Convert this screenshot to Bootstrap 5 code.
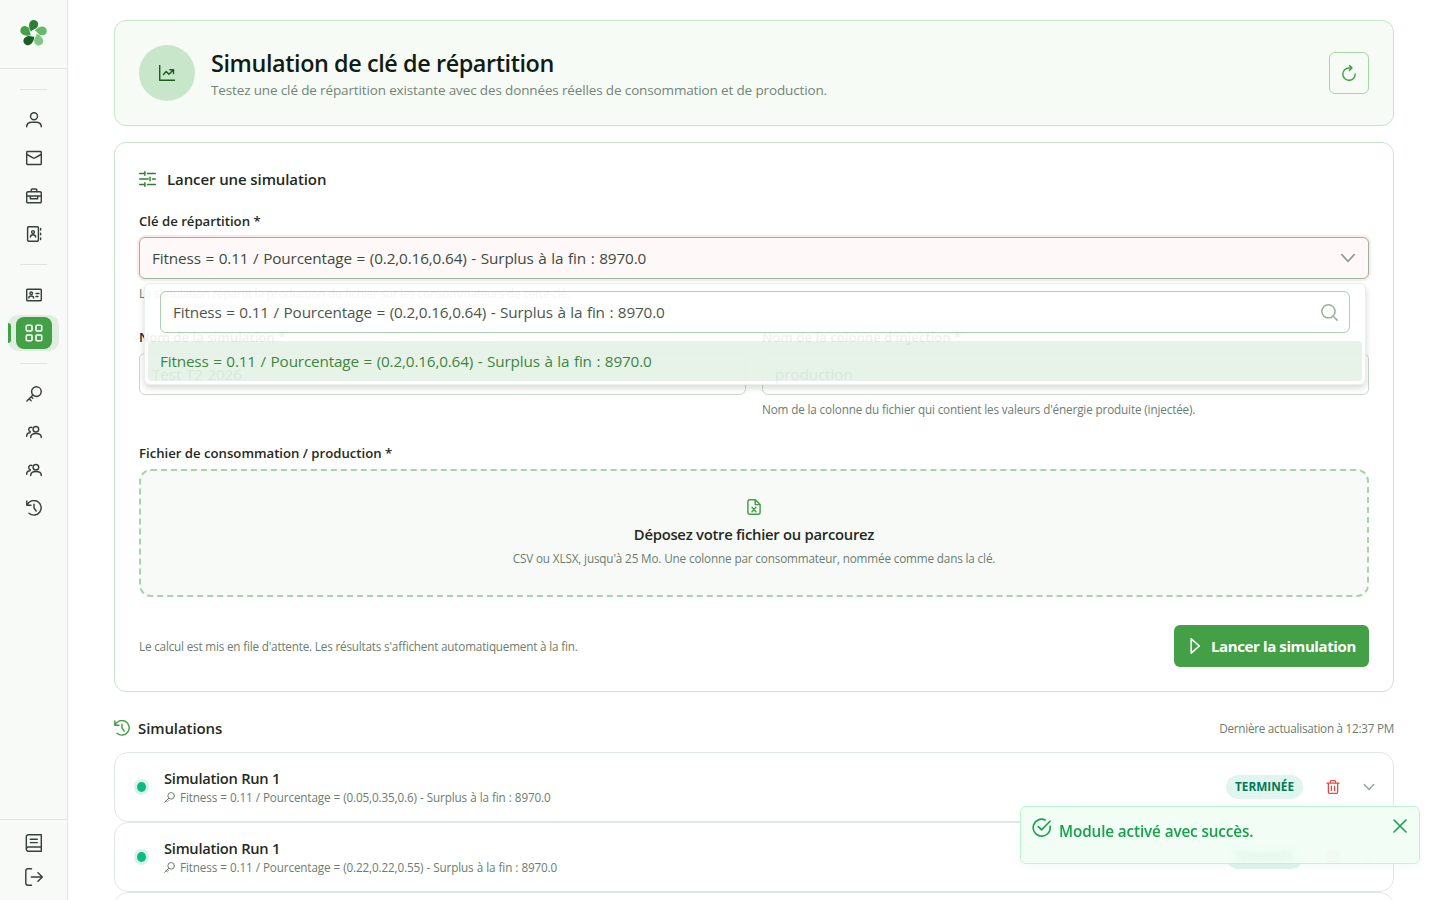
<!DOCTYPE html>
<html lang="fr">
<head>
<meta charset="utf-8">
<meta name="viewport" content="width=device-width, initial-scale=1">
<title>Simulation de clé de répartition</title>
<link href="https://cdn.jsdelivr.net/npm/bootstrap@5.3.0/dist/css/bootstrap.min.css" rel="stylesheet">
<style>
body{font-family:"Open Sans","Noto Sans",sans-serif;color:#1f2a21;background:#fff;height:100vh;overflow:hidden;font-size:16px}
svg{display:block;flex:none}
.ic{fill:none;stroke:currentColor;stroke-width:1.45;stroke-linecap:round;stroke-linejoin:round}
.rail{width:68px;height:100vh;background:#f8faf8;border-right:1px solid #e0e7e1;color:#374139}
.rail-logo{height:69px;border-bottom:1px solid #e0e7e1;padding-bottom:1px}
.rail-nav{padding-top:20px}
.rail-item{height:38px;width:50px}
.rail-sep{width:27px;height:1px;background:#dfe5e0;margin:11px 0}
.rail-sep.top-sep{margin-top:0}
.rail-on{width:51px;height:36px;margin:1px 0;background:#e0ede1;border-radius:10px;position:relative}
.rail-on::before{content:"";position:absolute;left:0;top:8px;width:3px;height:20px;background:#43a047;border-radius:0 3px 3px 0}
.rail-tile{width:36px;height:32px;background:#43a047;border-radius:8px;color:#fff}
.rail-foot{height:81px;border-top:1px solid #e0e7e1;padding-top:14px;gap:16px}
.page{width:1280px;height:100vh;padding-top:20px;overflow:hidden}
.hero{height:106px;padding:24px;background:#f6fbf6;border:1px solid #c8e6c9;border-radius:12px}
.hero-ico{width:56px;height:56px;background:#c8e6c9;color:#1b5e20}
.t{white-space:nowrap}
.t-h1{font-size:23.4px;font-weight:600;line-height:30px;color:#121b14;letter-spacing:-.41px;padding:2px 0 1px}
.t-sub{font-size:13.5px;line-height:21px;color:#738577;letter-spacing:-.14px;padding-top:1px}
.t-sec{font-size:15px;font-weight:600;line-height:24px;letter-spacing:-.1px}
.t-drop{font-size:14.8px;letter-spacing:-.26px;margin-top:7px}
.t-run{font-size:14.7px;line-height:22px;letter-spacing:-.27px}
.t-lab{font-size:13.2px;font-weight:600;line-height:20px;margin-bottom:6px;letter-spacing:-.02px}
.t-help{font-size:11.7px;line-height:20px;color:#6b7d6f;letter-spacing:-.135px}
.t-in{font-size:15.3px;line-height:24px;color:#3c4a40;word-spacing:.8px;letter-spacing:-.135px}
.t-help.ls-1{letter-spacing:-.18px}
.t-help.ls-2{letter-spacing:-.25px}
.btn-refresh{width:40px;height:42px;border:1px solid #a5d6a7;border-radius:6px;color:#43a047}
.panel{margin-top:16px;height:550px;padding:24px;background:#fff;border:1px solid #c8e6c9;border-radius:12px}
.panel-head{height:24px;gap:11px;margin-bottom:20px}
.field{height:42px;border:1px solid #cbd8cd;border-radius:6px;padding:0 12px;background:#fff}
.field-bad{background:#fff8f8;border-color:#9bb39e;box-shadow:0 0 0 2px #fdeaea;color:#90a093}
.hint{margin-top:4px;height:20px}
.block-gap{margin-top:24px}
.panel-foot{margin-top:28px}
.pop{position:absolute;left:5px;right:3px;top:46px;height:102px;background:#fff;border:1px solid #e9efe9;border-radius:6px;opacity:.93;box-shadow:0 3px 6px rgba(0,0,0,.16);z-index:5;padding:7px 3px 3px}
.pop .t-in{letter-spacing:-.17px}
.pop .field{margin:0 12px;border-color:#a5cfa8;padding-right:11px}
.pop-opt{margin-top:8px;height:40px;padding:0 12px;background:#e6f3e7;border-radius:4px}
.pop-opt .t-in{color:#2e7d32}
.drop{height:128px;border:2px dashed #a5d6a7;border-radius:12px;background:#f8faf8;padding-top:28px}
.drop .t-help{margin-top:2px}
.btn-run{width:195px;height:42px;background:#43a047;border-radius:6px;color:#fff}
.btn-run .t-in{color:#fff;font-size:15px;letter-spacing:-.39px;word-spacing:0}
.list-head{margin:24px 0 12px;height:24px}
.run{height:70px;border:1px solid #e0e7e4;border-radius:14px;padding:0 18px 0 22px;background:#fff}
.run-text{margin-left:18px}
.run-sub{line-height:17px;padding-bottom:1px;gap:5px;word-spacing:.25px}
.run-bin{color:#ef4444;margin:0 23px}
.run-more{color:#90a093}
.dot{width:9px;height:10px;border-radius:50%;background:#10b981;box-shadow:0 0 0 3px #d6f3e9}
.pill{width:77px;height:24px;background:#e0f5ee;border-radius:12px;color:#047857;font-size:11.8px;font-weight:700}
.note{position:absolute;right:20px;top:806px;width:400px;height:58px;background:rgba(240,253,244,.94);backdrop-filter:blur(2px);border:1px solid #bbf7d0;border-radius:6px;color:#16a34a;box-shadow:0 4px 8px rgba(34,197,94,.05);padding:11px;z-index:9}
.note .t-in{color:inherit;margin:1px 0 0 7px;word-spacing:0;letter-spacing:-.13px}
</style>
</head>
<body class="d-flex">
<svg width="0" height="0" class="position-absolute">
<defs>
<symbol id="i-key" viewBox="0 0 16 16"><circle cx="10.4" cy="5.6" r="4.8"/><path d="M7 9 .9 15.1M3.2 12.8l1.9 1.9M5.2 10.8l1.5 1.5"/></symbol>
<symbol id="i-users" viewBox="0 0 16 16"><circle cx="9.9" cy="5.2" r="2.8"/><path d="M4.700 13.400c0-3 1.900-3.900 5.200-3.900s5.400.9 5.400 3.900M5.900 3.500C4.300 2.900 2.700 4 2.700 5.600c0 1 .6 1.800 1.600 2.100M.7 12.200c0-2 1.100-3.300 3.300-3.400"/></symbol>
<symbol id="i-hist" viewBox="0 0 16 16"><path d="M.8 1v4.200H5M1.100 5A7.300 7.300 0 1 1 3 13.300M8 4.300V8l2.200 3"/></symbol>
<symbol id="i-down" viewBox="0 0 16 16"><path stroke-width="1.7" d="m1.800 4.700 6.200 6.600 6.200-6.600"/></symbol>
<symbol id="i-bin" viewBox="0 0 16 16"><path d="M1 3.700h14M2.700 3.700v9.900c0 1 .6 1.700 1.700 1.700h7.200c1 0 1.700-.7 1.700-1.700V3.700M5 3.500V2C5 1.200 5.400.8 6.200.8h3.600c.8 0 1.200.4 1.200 1.200v1.500M6.200 7v5M9.800 7v5"/></symbol>
<path id="petal" d="M-2.400-2C-5.600-6.500-5-13.600.1-13.600 5.100-13.600 5.700-8.200 3.300-5.700 1.600-4-1-3.800-2.400-2Z"/>
</defs>
</svg>

<aside class="rail d-flex flex-column flex-shrink-0">
  <div class="rail-logo d-flex align-items-center justify-content-center">
    <svg width="33" height="33" viewBox="-16.5 -16.5 33 33">
      <use href="#petal" fill="#2e7d32"/><use href="#petal" fill="#66bb6a" transform="rotate(72)"/><use href="#petal" fill="#81c784" transform="rotate(144)"/><use href="#petal" fill="#1b5e20" transform="rotate(216)"/><use href="#petal" fill="#43a047" transform="rotate(288)"/></svg>
  </div>
  <nav class="rail-nav d-flex flex-column align-items-center flex-grow-1">
    <div class="rail-sep top-sep"></div>
    <div class="rail-item d-flex align-items-center justify-content-center"><svg class="ic" width="16" height="16" viewBox="0 0 16 16"><circle cx="8" cy="4.3" r="3.5"/><path d="M.7 14.800c0-3.300 2-4.600 5.300-4.600h4c3.300 0 5.300 1.300 5.300 4.600"/></svg></div>
    <div class="rail-item d-flex align-items-center justify-content-center"><svg class="ic" width="16" height="16" viewBox="0 0 16 16"><rect x=".7" y="1.5" width="14.6" height="13" rx="1"/><path d="M1 4.500l6 3.400q1 .5 2 0l6-3.400"/></svg></div>
    <div class="rail-item d-flex align-items-center justify-content-center"><svg class="ic" width="16" height="16" viewBox="0 0 16 16"><rect x=".7" y="3.7" width="14.6" height="11" rx="1.2"/><path d="M5.200 3.500V2q0-1 1-1h3.600q1 0 1 1v1.500M1 8h14M4.300 8v2.700h7.400V8"/></svg></div>
    <div class="rail-item d-flex align-items-center justify-content-center"><svg class="ic" width="16" height="16" viewBox="0 0 16 16"><rect x="1.6" y=".7" width="10.8" height="14.6" rx="1.2"/><circle cx="7" cy="6" r="1.4"/><path d="M4.400 11c0-3 5.200-3 5.200 0M14.600 2.500v1.500M14.600 7.200v1.600M14.600 12v1.500"/></svg></div>
    <div class="rail-sep"></div>
    <div class="rail-item d-flex align-items-center justify-content-center"><svg class="ic" width="16" height="16" viewBox="0 0 16 16"><rect x=".7" y="2.2" width="14.6" height="11.6" rx="1"/><circle cx="5.2" cy="6.3" r="1.3"/><path d="M2.800 11c0-2.700 4.800-2.700 4.800 0M10 6.400h3M10 9.400h2"/></svg></div>
    <div class="rail-on d-flex align-items-center justify-content-center"><span class="rail-tile d-flex align-items-center justify-content-center"><svg class="ic" width="18" height="18" viewBox="-1 -1 18 18"><g stroke-width="1.6"><rect x=".3" y=".3" width="5.700" height="5.700" rx="1"/><rect x="10" y=".3" width="5.700" height="5.700" rx="1"/><rect x=".3" y="10" width="5.700" height="5.700" rx="1"/><rect x="10" y="10" width="5.700" height="5.700" rx="1"/></g></svg></span></div>
    <div class="rail-sep"></div>
    <div class="rail-item d-flex align-items-center justify-content-center"><svg class="ic" width="16" height="16"><use href="#i-key"/></svg></div>
    <div class="rail-item d-flex align-items-center justify-content-center"><svg class="ic" width="16" height="16"><use href="#i-users"/></svg></div>
    <div class="rail-item d-flex align-items-center justify-content-center"><svg class="ic" width="16" height="16"><use href="#i-users"/></svg></div>
    <div class="rail-item d-flex align-items-center justify-content-center"><svg class="ic" width="16" height="16"><use href="#i-hist"/></svg></div>
  </nav>
  <div class="rail-foot d-flex flex-column align-items-center">
    <svg class="ic" width="18" height="18" viewBox="0 0 18 18"><path d="M3.500.8h12.800v16.400H3.400C2.200 17.200 1.300 16.400 1.300 15.200V3q0-2.200 2.200-2.200ZM1.500 14.500q.3-1.500 1.900-1.500h12.700M5.300 5.200h7M5.300 8.600h7"/></svg>
    <svg class="ic" width="18" height="18" viewBox="0 0 18 18"><path d="M6.500.8H3Q.8.8.8 3v12q0 2.200 2.200 2.200h3.500M6.300 9h11M13 4.700 17.300 9 13 13.300"/></svg>
  </div>
</aside>

<main class="flex-grow-1 d-flex justify-content-center">
<div class="page">
  <header class="hero d-flex align-items-center">
    <div class="hero-ico rounded-circle d-flex align-items-center justify-content-center"><svg class="ic" width="16" height="16" viewBox="0 0 16 16"><path d="M.7.5v14.800h15M4.500 9.500 7.200 6.600l2.700 2.700 4.400-4.400M10.800 4.700h3.700v3.700"/></svg></div>
    <div class="ms-3 flex-grow-1">
      <h1 class="t t-h1 m-0">Simulation de clé de répartition</h1>
      <p class="t t-sub m-0">Testez une clé de répartition existante avec des données réelles de consommation et de production.</p>
    </div>
    <button class="btn btn-refresh p-0 d-flex align-items-center justify-content-center" aria-label="Actualiser"><svg class="ic" width="16" height="16" viewBox="0 0 16 16"><path d="M14.200 9A6.200 6.200 0 1 1 8 2.900h3M8.400.4 11 2.900 8.400 5.500"/></svg></button>
  </header>

  <section class="panel">
    <div class="panel-head d-flex align-items-center"><svg class="ic" color="#2e7d32" width="17" height="16" viewBox="0 0 17 16"><path d="M.7 2.500h5M5.900.7v3.600M8.500 2.500h7.800M.7 8h8.500M11 6.200v3.600M13.500 8h2.800M.7 13.500h5M5.900 11.700v3.600M8.500 13.500h7.800"/></svg><span class="t t-sec">Lancer une simulation</span></div>
    <label class="d-block t t-lab">Clé de répartition *</label>
    <div class="position-relative">
      <div class="field field-bad d-flex align-items-center justify-content-between"><span class="t t-in">Fitness = 0.11 / Pourcentage = (0.2,0.16,0.64) - Surplus à la fin : 8970.0</span><svg class="ic" width="16" height="16"><use href="#i-down"/></svg></div>
      <div class="pop">
        <div class="field d-flex align-items-center justify-content-between"><span class="t t-in">Fitness = 0.11 / Pourcentage = (0.2,0.16,0.64) - Surplus à la fin : 8970.0</span><svg class="ic" color="#98a99b" width="17" height="17" viewBox="0 0 16 16"><circle cx="7" cy="7" r="6.2"/><path d="m11.500 11.500 3.700 3.700"/></svg></div>
        <div class="pop-opt d-flex align-items-center"><span class="t t-in">Fitness = 0.11 / Pourcentage = (0.2,0.16,0.64) - Surplus à la fin : 8970.0</span></div>
      </div>
    </div>
    <div class="t t-help hint ls-1">La simulation répartit la production du fichier sur les consommateurs de cette clé.</div>
    <div class="row gx-3 block-gap">
      <div class="col-6"><label class="d-block t t-lab">Nom de la simulation *</label><div class="field d-flex align-items-center"><span class="t t-in">Test T2 2026</span></div></div>
      <div class="col-6"><label class="d-block t t-lab">Nom de la colonne d'injection *</label><div class="field d-flex align-items-center"><span class="t t-in">production</span></div>
      <div class="t t-help hint">Nom de la colonne du fichier qui contient les valeurs d'énergie produite (injectée).</div></div>
    </div>
    <label class="d-block t t-lab block-gap">Fichier de consommation / production *</label>
    <div class="drop d-flex flex-column align-items-center text-center">
      <svg class="ic" color="#43a047" width="16" height="16" viewBox="0 0 16 16"><path d="M9.300.7H3.800C2.600.7 1.900 1.400 1.900 2.500v11c0 1.100.7 1.800 1.900 1.800h8.400c1.200 0 1.900-.7 1.900-1.800v-8ZM9.200.9v4.700h4.700M6 8.300l4 4.500M10 8.300l-4 4.500"/></svg>
      <div class="t t-sec t-drop">Déposez votre fichier ou parcourez</div>
      <div class="t t-help">CSV ou XLSX, jusqu'à 25 Mo. Une colonne par consommateur, nommée comme dans la clé.</div>
    </div>
    <div class="panel-foot d-flex align-items-center justify-content-between">
      <span class="t t-help ls-1">Le calcul est mis en file d'attente. Les résultats s'affichent automatiquement à la fin.</span>
      <button class="btn btn-run p-0 d-flex align-items-center"><svg class="ic ms-2" width="24" height="18" viewBox="-4 -1 24 18"><path stroke-width="1.6" d="M4.200.9v14.200L12.300 8Z"/></svg><span class="t t-in fw-bold ms-1">Lancer la simulation</span></button>
    </div>
  </section>

  <div class="list-head d-flex align-items-center justify-content-between">
    <div class="d-flex align-items-center gap-2"><svg class="ic" color="#43a047" width="16" height="16"><use href="#i-hist"/></svg><span class="t t-sec">Simulations</span></div>
    <span class="t t-help ls-2">Dernière actualisation à 12:37 PM</span>
  </div>
  <div id="run-list"></div>
</div>
</main>

<div class="note d-flex align-items-start" role="alert">
  <svg class="ic" width="20" height="20" viewBox="0 0 20 20"><path stroke-width="1.6" d="M18.200 8.300v1.200A8.500 8.500 0 1 1 13.200 1.900M6.300 8.600l3.300 3.300L18 3.200"/></svg>
  <span class="t t-in fw-semibold">Module activé avec succès.</span>
  <svg class="ic ms-auto" width="16" height="16" viewBox="0 0 16 16"><path stroke-width="1.6" d="m2 2 12 12M14 2 2 14"/></svg>
</div>
<script src="https://cdn.jsdelivr.net/npm/bootstrap@5.3.0/dist/js/bootstrap.bundle.min.js"></script>
<script>
// The run list is built from its data; every run shares the same row layout.
const runs = [
  'Fitness = 0.11 / Pourcentage = (0.05,0.35,0.6) - Surplus à la fin : 8970.0',
  'Fitness = 0.11 / Pourcentage = (0.22,0.22,0.55) - Surplus à la fin : 8970.0'
];
document.getElementById('run-list').innerHTML = runs.map(key => `
  <div class="run d-flex align-items-center"><span class="dot"></span>
    <div class="run-text flex-grow-1"><div class="t t-sec t-run">Simulation Run 1</div>
      <div class="t t-help run-sub d-flex align-items-center"><svg class="ic" width="11" height="11"><use href="#i-key"/></svg><span>${key}</span></div></div>
    <span class="pill d-flex align-items-center justify-content-center">TERMINÉE</span>
    <svg class="ic run-bin" width="14" height="14"><use href="#i-bin"/></svg>
    <svg class="ic run-more" width="12" height="12"><use href="#i-down"/></svg></div>`).join('') + '<div class="run"></div>';
</script>
</body>
</html>
